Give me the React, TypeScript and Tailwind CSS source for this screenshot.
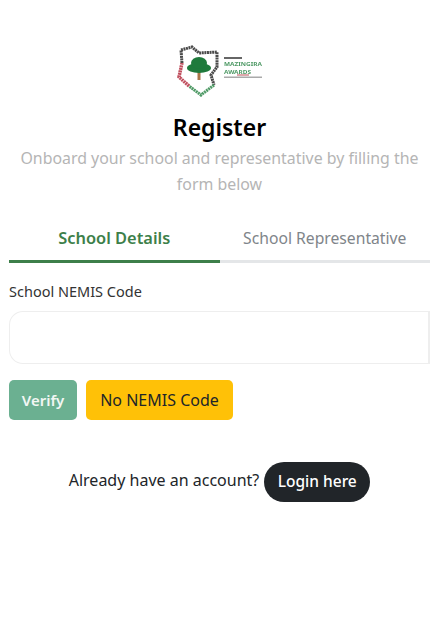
function Logo() {
  return (
    <svg width="88" height="52" viewBox="0 0 88 52" fill="none" className="blur-[0.7px]">
      {/* kenya outline */}
      <path d="M4 5 L15 2 L22 8 L40 7 L40 22 L34 30 L37 40" stroke="#4a4a4a" strokeWidth="3" strokeDasharray="2 0.6" />
      <path d="M37 40 L24 50 L12 41" stroke="#4f9a66" strokeWidth="3" strokeDasharray="2 0.6" />
      <path d="M12 41 L2 32 L5 18" stroke="#c0505f" strokeWidth="3.5" strokeDasharray="2 0.6" />
      <path d="M5 18 L4 5" stroke="#4a4a4a" strokeWidth="3" strokeDasharray="2 0.6" />
      {/* tree */}
      <rect x="20.5" y="24" width="3" height="11" fill="#a9774a" />
      <ellipse cx="22" cy="23" rx="12" ry="5" fill="#1f7a3c" />
      <ellipse cx="22" cy="18" rx="8" ry="6" fill="#1f7a3c" />
      {/* wordmark */}
      <rect x="47" y="12" width="18" height="2" fill="#666" />
      <text x="47" y="21" fontSize="5.4" fontWeight="700" fill="#4f9a66" fontFamily="Noto Sans, sans-serif" textLength="38" lengthAdjust="spacingAndGlyphs">MAZINGIRA</text>
      <text x="47" y="28.6" fontSize="5.4" fontWeight="700" fill="#4f9a66" fontFamily="Noto Sans, sans-serif" textLength="27" lengthAdjust="spacingAndGlyphs">AWARDS</text>
      <rect x="60" y="29.5" width="12" height="1" fill="#c0505a" />
      <rect x="47" y="31.5" width="38" height="1.5" fill="#aaa" />
    </svg>
  );
}

export default function App() {
  return (
    <div className="h-[637px] w-[439px] overflow-hidden bg-white font-['Noto_Sans',sans-serif] text-[#212529]">
      <div className="w-[430px] pl-[9px] pt-[45px]">
        {/* Header */}
        <div className="flex flex-col items-center text-center">
          <div className="ml-[3px]">
            <Logo />
          </div>
          <h1 className="mt-[12px] text-[23px] leading-[36px] font-semibold text-black">Register</h1>
          <p className="text-[15.9px] leading-[26px] text-[#b5b5b5]">
            Onboard your school and representative by filling the form below
          </p>
        </div>

        {/* Tabs */}
        <div className="mt-[29px] grid grid-cols-2 text-center leading-[24px]">
          <div className="border-b-[3px] border-[#3d7f4a] pb-[10px] text-[16.4px] font-semibold text-[#3d7f4a]">School Details</div>
          <div className="border-b-[3px] border-[#e4e6e8] pb-[10px] text-[15.7px] text-[#7f858a]">School Representative</div>
        </div>

        {/* Form */}
        <label className="mt-[18px] block text-[14.5px] leading-[20px] text-[#333]">School NEMIS Code</label>
        <input type="text" className="mt-[10px] block h-[53px] w-full rounded-l-[14px] border border-r-2 border-[#eeeeee] bg-white" />

        <div className="mt-[16px] flex gap-[9px]">
          <button className="h-[40px] w-[68px] rounded-[5px] bg-[#6bb091] text-[15px] font-semibold text-[#f2f7f4]">Verify</button>
          <button className="h-[40px] w-[147px] rounded-[5px] bg-[#ffc107] text-[16px] text-[#212529]">No NEMIS Code</button>
        </div>

        {/* Login */}
        <div className="mt-[42px] flex items-center justify-center gap-[5px]">
          <span className="mb-[5px] text-[16px] text-[#212529]">Already have an account?</span>
          <button className="h-[40px] w-[106px] rounded-full bg-[#212529] text-[15.5px] font-medium text-white">Login here</button>
        </div>
      </div>
    </div>
  );
}
